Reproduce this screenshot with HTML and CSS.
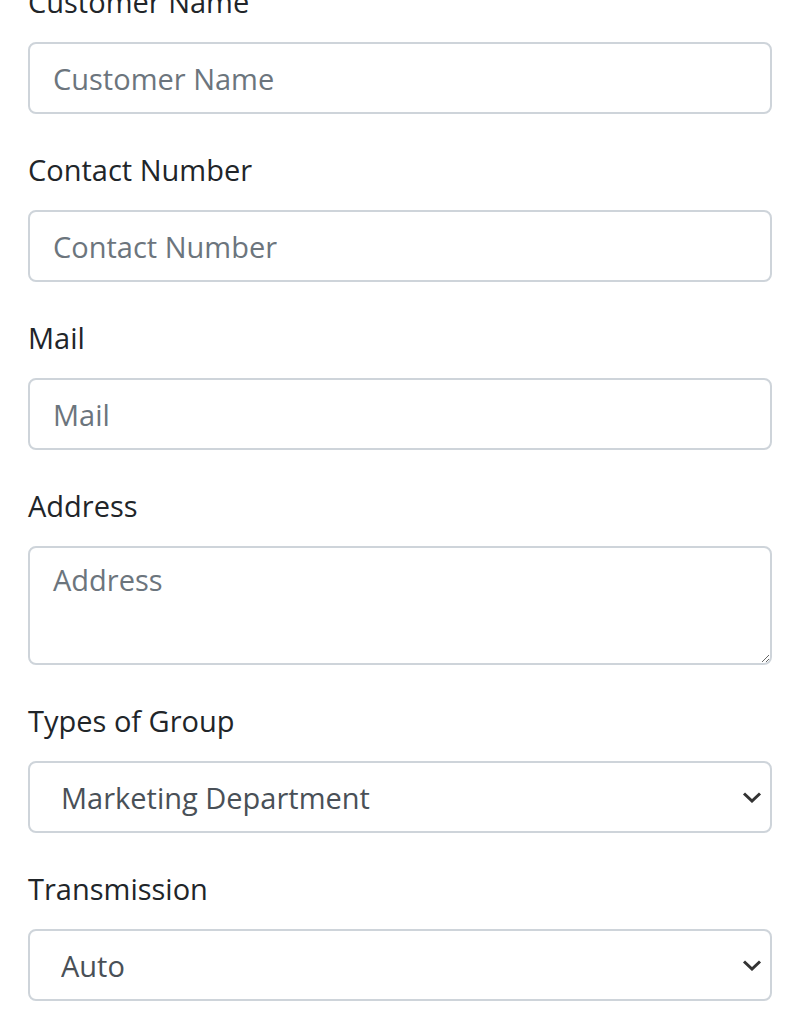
FILE: index.html
```html
<!DOCTYPE html>
<html lang="en">
<head>
<meta charset="utf-8">
<title>Customer Form</title>
<link rel="stylesheet" href="styles.css">
</head>
<body>
<form class="form">
  <div class="group">
    <label class="label" for="name">Customer Name</label>
    <input class="control" id="name" type="text" placeholder="Customer Name">
  </div>
  <div class="group">
    <label class="label" for="contact">Contact Number</label>
    <input class="control" id="contact" type="text" placeholder="Contact Number">
  </div>
  <div class="group">
    <label class="label" for="mail">Mail</label>
    <input class="control" id="mail" type="text" placeholder="Mail">
  </div>
  <div class="group">
    <label class="label" for="address">Address</label>
    <textarea class="control area" id="address" placeholder="Address"></textarea>
  </div>
  <div class="group">
    <label class="label" for="group">Types of Group</label>
    <div class="select-wrap">
      <select class="control select" id="group">
        <option>Marketing Department</option>
      </select>
      <svg class="chevron" viewBox="0 0 20 11" width="20" height="11"><path d="M2 1.5l8 7.5 8-7.5" fill="none" stroke="#333" stroke-width="3"/></svg>
    </div>
  </div>
  <div class="group">
    <label class="label" for="trans">Transmission</label>
    <div class="select-wrap">
      <select class="control select" id="trans">
        <option>Auto</option>
      </select>
      <svg class="chevron" viewBox="0 0 20 11" width="20" height="11"><path d="M2 1.5l8 7.5 8-7.5" fill="none" stroke="#333" stroke-width="3"/></svg>
    </div>
  </div>
</form>
</body>
</html>
```
FILE: styles.css
```css
html, body {
  margin: 0;
  padding: 0;
  background: #fff;
}

body {
  font-family: "Open Sans", "Noto Sans", sans-serif;
  color: #212529;
}

.form {
  margin-top: -22px;
  padding: 0 28px;
}

.group {
  margin-bottom: 32px;
}

.label {
  display: block;
  font-size: 29px;
  line-height: 48px;
  margin-bottom: 16px;
  color: #212529;
}

.control {
  display: block;
  width: 100%;
  box-sizing: border-box;
  height: 72px;
  padding: 0 23px;
  font-family: inherit;
  font-size: 29px;
  color: #495057;
  background: #fff;
  border: 2px solid #ced4da;
  border-radius: 8px;
  outline: none;
  margin: 0;
}

.control::placeholder {
  color: #6c757d;
  opacity: 1;
}

.area {
  height: 119px;
  padding-top: 10px;
  line-height: 44px;
  resize: vertical;
}

.select-wrap {
  position: relative;
}

.select {
  -webkit-appearance: none;
  appearance: none;
  padding-left: 31px;
}

.chevron {
  position: absolute;
  right: 10px;
  top: 31px;
  pointer-events: none;
}
```
